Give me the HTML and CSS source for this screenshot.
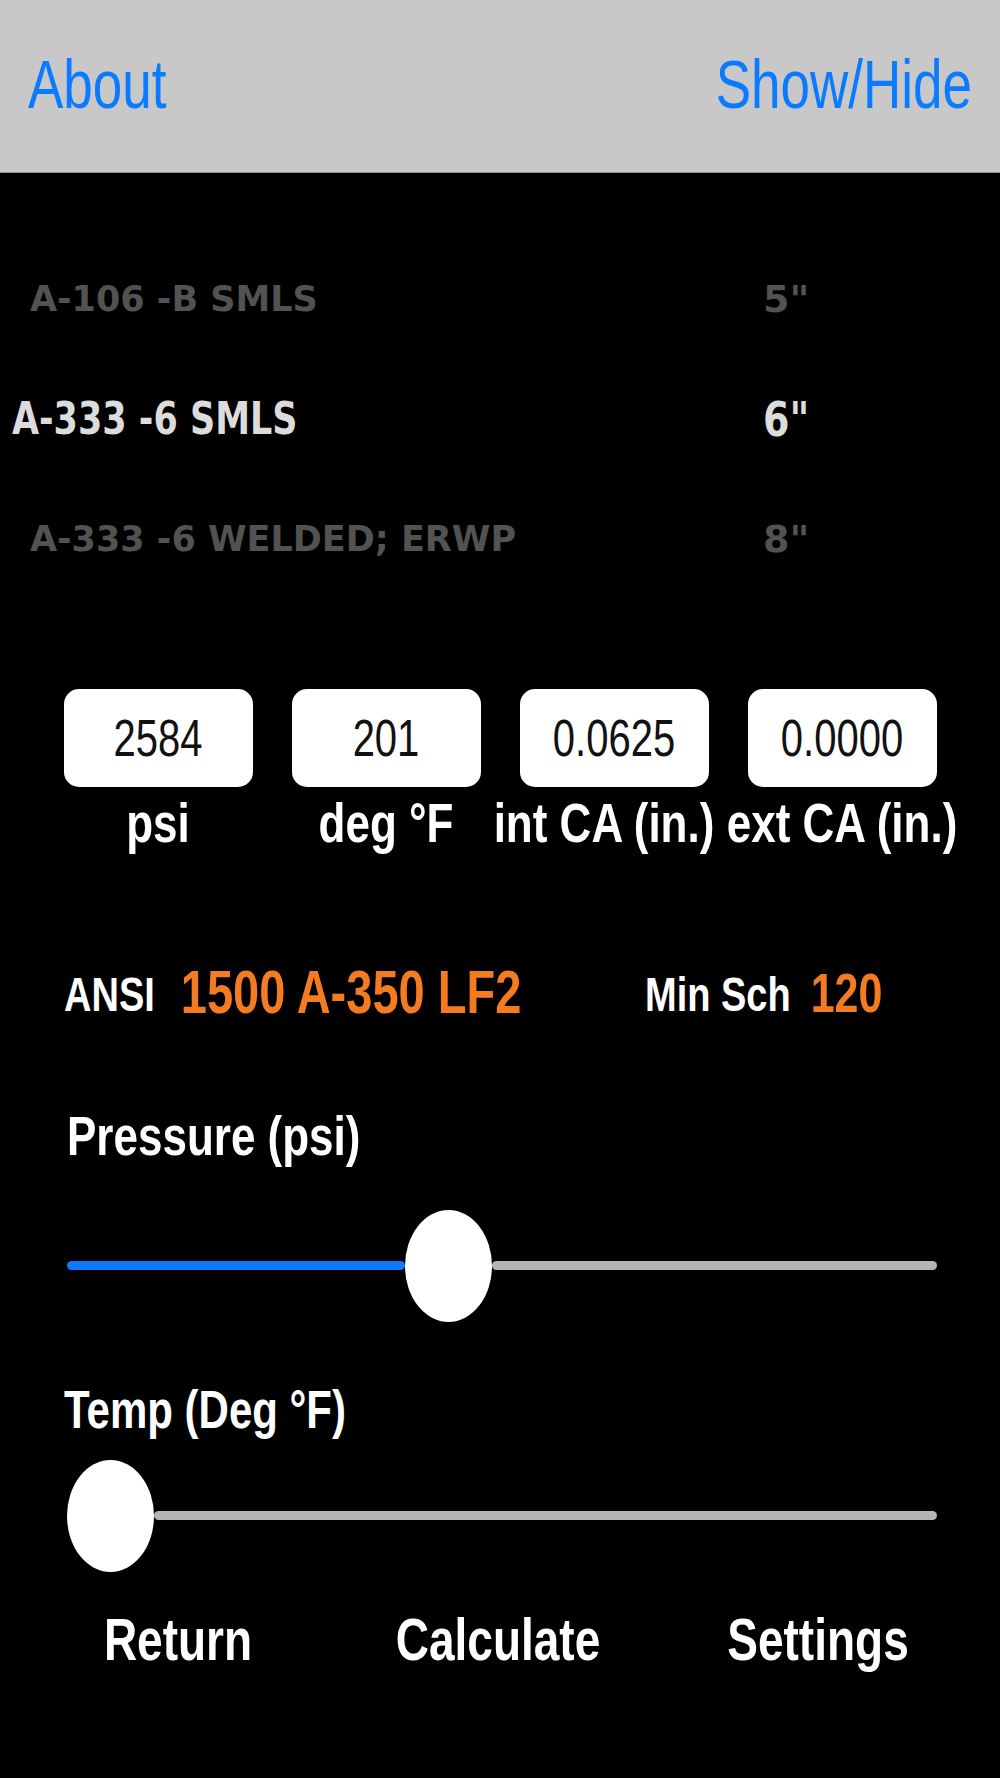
FILE: index.html
```html
<!DOCTYPE html>
<html lang="en">
<head>
    <meta charset="UTF-8">
    <meta name="viewport" content="width=device-width, initial-scale=1.0">
    <title>Flange Rating</title>
    <link rel="stylesheet" href="styles.css">
</head>
<body>
    <header class="navbar">
        <a class="nav-link" href="#">About</a>
        <a class="nav-link" href="#">Show/Hide</a>
    </header>

    <!-- material / size wheel -->
    <section class="picker">
        <div class="pick-row dim"><span class="pick-name">A-106 -B SMLS</span><span class="pick-size">5&quot;</span></div>
        <div class="pick-row selected"><span class="pick-name">A-333 -6 SMLS</span><span class="pick-size">6&quot;</span></div>
        <div class="pick-row dim"><span class="pick-name">A-333 -6 WELDED; ERWP</span><span class="pick-size">8&quot;</span></div>
    </section>

    <section class="fields">
        <div class="field">
            <div class="field-box"><span>2584</span></div>
            <div class="field-label">psi</div>
        </div>
        <div class="field">
            <div class="field-box"><span>201</span></div>
            <div class="field-label">deg °F</div>
        </div>
        <div class="field int">
            <div class="field-box"><span>0.0625</span></div>
            <div class="field-label">int CA (in.)</div>
        </div>
        <div class="field">
            <div class="field-box"><span>0.0000</span></div>
            <div class="field-label">ext CA (in.)</div>
        </div>
    </section>

    <section class="result">
        <div class="result-group first">
            <span class="result-key">ANSI</span>
            <span class="result-val">1500 A-350 LF2</span>
        </div>
        <div class="result-group">
            <span class="result-key">Min Sch</span>
            <span class="result-val sch">120</span>
        </div>
    </section>

    <section class="slider-block">
        <div class="slider-label">Pressure (psi)</div>
        <div class="slider">
            <div class="track filled" style="width: 338px"></div>
            <div class="thumb"></div>
            <div class="track"></div>
        </div>
    </section>

    <section class="slider-block temp">
        <div class="slider-label">Temp (Deg °F)</div>
        <div class="slider">
            <div class="thumb"></div>
            <div class="track"></div>
        </div>
    </section>

    <nav class="toolbar">
        <a class="tool" href="#">Return</a>
        <a class="tool" href="#">Calculate</a>
        <a class="tool" href="#">Settings</a>
    </nav>
</body>
</html>
```

FILE: styles.css
```css
body {
    margin: 0;
    background-color: #000;
    font-family: "Liberation Sans", Arial, sans-serif;
}

a {
    text-decoration: none;
}

/* the screenshot is stretched vertically, so the lettering is too */
.nav-link,
.pick-row.selected span,
.field-box span,
.field-label,
.result-key,
.result-val,
.slider-label,
.tool {
    display: inline-block;
    transform: scaleY(1.28);
}

.navbar {
    height: 173px;
    padding: 51px 28px 0;
    box-sizing: border-box;
    display: flex;
    justify-content: space-between;
    align-items: flex-start;
    background-color: #c8c8c8;
    border-bottom: 1px solid #8e8e8e;
}

.nav-link {
    color: #0a7aff;
    font-size: 53px;
    line-height: 68px;
}

.picker {
    padding-top: 66px;
    font-family: "DejaVu Sans", Verdana, sans-serif;
    font-weight: bold;
    font-size: 35px;
}

.pick-row {
    display: grid;
    grid-template-columns: 763px auto;
    height: 120px;
    line-height: 120px;
    color: #dcdcdc;
}

.pick-name {
    padding-left: 30px;
}

.pick-size {
    font-size: 38px;
}

.pick-row.selected .pick-name {
    padding-left: 12px;
}

.pick-row.dim {
    color: #525252;
}

.fields {
    margin-top: 90px;
    padding: 0 44px;
    display: grid;
    grid-template-columns: repeat(4, minmax(0, 1fr));
}

.field {
    display: flex;
    flex-direction: column;
    align-items: center;
}

.field-box {
    width: 189px;
    height: 98px;
    line-height: 98px;
    text-align: center;
    background-color: #fff;
    border-radius: 15px;
    color: #111;
    font-size: 40px;
}

.field-label {
    margin-top: 8px;
    line-height: 56px;
    color: #fff;
    font-size: 44px;
    font-weight: bold;
    white-space: nowrap;
}

.field.int .field-label {
    margin-right: 20px;
}

.result {
    margin-top: 102px;
    padding-left: 64px;
    display: flex;
    align-items: baseline;
    line-height: 77px;
    font-weight: bold;
}

.result-group {
    display: flex;
    align-items: baseline;
}

.result-group.first {
    width: 581px;
}

.result-key {
    color: #fff;
    font-size: 38px;
}

.result-val {
    margin-left: 26px;
    color: #f47b20;
    font-size: 47px;
}

.result-val.sch {
    margin-left: 20px;
    font-size: 43px;
}

.slider-block {
    margin-top: 70px;
    padding: 0 63px 0 67px;
}

.slider-block.temp {
    margin-top: 56px;
}

.slider-label {
    line-height: 64px;
    color: #fff;
    font-size: 44px;
    font-weight: bold;
}

.temp .slider-label {
    margin-left: -3px;
    font-size: 42px;
}

.slider {
    margin-top: 41px;
    height: 113px;
    display: flex;
    align-items: center;
}

.temp .slider {
    margin-top: 17px;
}

.track {
    flex: 1;
    height: 9px;
    border-radius: 5px;
    background-color: #b5b5b5;
}

.track.filled {
    flex: none;
    background-color: #0a7aff;
}

.thumb {
    flex: none;
    width: 87px;
    height: 112px;
    border-radius: 50%;
    background-color: #fff;
}

.toolbar {
    margin-top: 30px;
    padding: 0 22px 0 18px;
    display: grid;
    grid-template-columns: repeat(3, 1fr);
    justify-items: center;
}

.tool {
    line-height: 77px;
    color: #fff;
    font-size: 46px;
    font-weight: bold;
}
```
